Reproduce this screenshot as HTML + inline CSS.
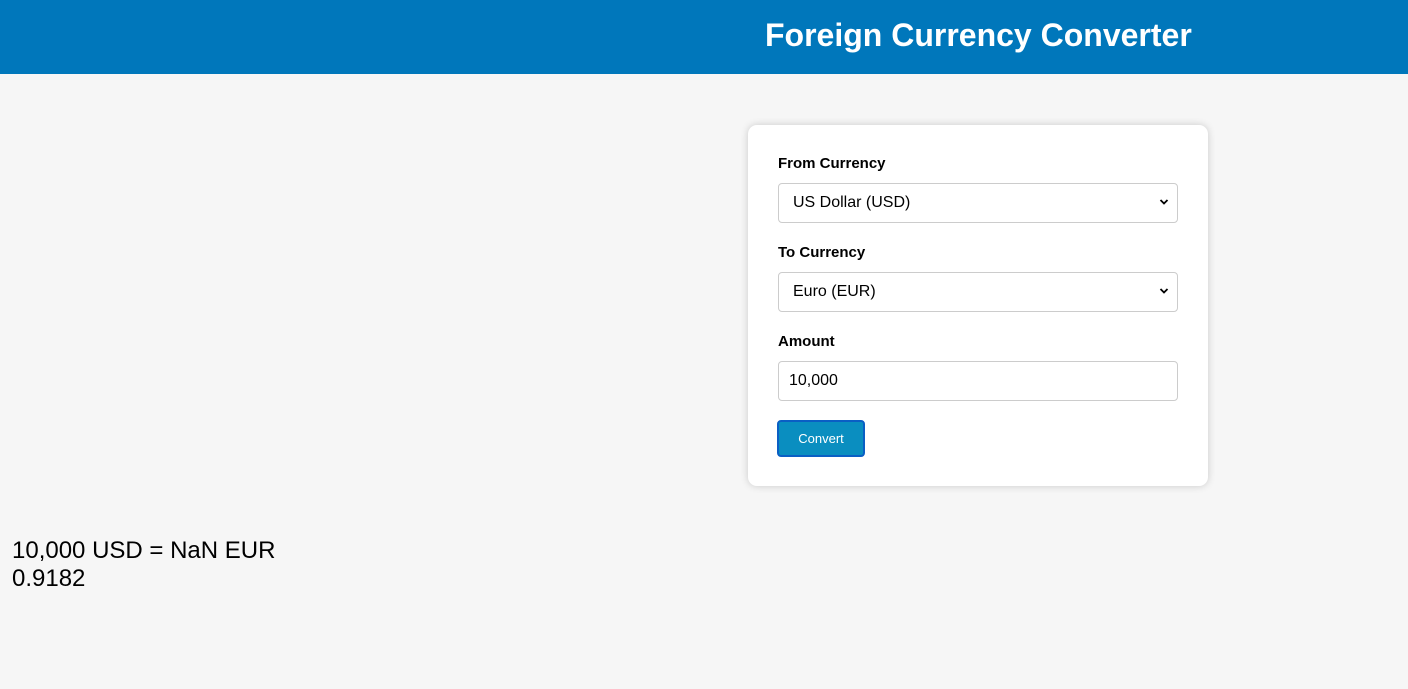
<!DOCTYPE html>
<html><head><meta charset="utf-8"><style>
body{margin:0;background:#f6f6f6;font-family:"Liberation Sans",Arial,sans-serif;width:1408px;height:689px;overflow:hidden;position:relative}
.hdr{position:absolute;left:0;top:0;width:1408px;height:74px;background:#0077bb}
.hdr h1{position:absolute;left:765px;top:17px;margin:0;color:#fff;font-size:32px;font-weight:bold;white-space:nowrap;letter-spacing:0}
.card{position:absolute;left:748px;top:125px;width:460px;height:361px;background:#fff;border-radius:9px;box-shadow:0 0 8px rgba(0,0,0,0.18)}
.lbl{position:absolute;left:30px;font-size:15px;font-weight:bold;color:#000}
.fld{position:absolute;left:30px;width:398px;height:38px;border:1px solid #ccc;border-radius:4px;background:#fff;font-size:16px;line-height:38px;color:#000}
.chev{position:absolute;right:8px;top:14px}
.btn{position:absolute;left:29px;top:295px;width:84px;height:33px;border:2px solid #0a5fc4;border-radius:4px;background:#0a8ec0;color:#fff;font-size:13px;line-height:33px;text-align:center}
.res{position:absolute;left:12px;top:537px;font-size:24px;line-height:28px;color:#000}
</style></head><body>
<div class="hdr"><h1>Foreign Currency Converter</h1></div>
<div class="card">
<div class="lbl" style="top:30px">From Currency</div>
<div class="fld" style="top:58px"><span style="padding-left:14px">US Dollar (USD)</span><svg class="chev" width="10" height="8" viewBox="0 0 10 8"><path d="M1.5 2 L5 5.5 L8.5 2" stroke="#000" stroke-width="1.8" fill="none"/></svg></div>
<div class="lbl" style="top:119px">To Currency</div>
<div class="fld" style="top:147px"><span style="padding-left:14px">Euro (EUR)</span><svg class="chev" width="10" height="8" viewBox="0 0 10 8"><path d="M1.5 2 L5 5.5 L8.5 2" stroke="#000" stroke-width="1.8" fill="none"/></svg></div>
<div class="lbl" style="top:208px">Amount</div>
<div class="fld" style="top:236px"><span style="padding-left:10px">10,000</span></div>
<div class="btn">Convert</div>
</div>
<div class="res">10,000 USD = NaN EUR<br>0.9182</div>
</body></html>
